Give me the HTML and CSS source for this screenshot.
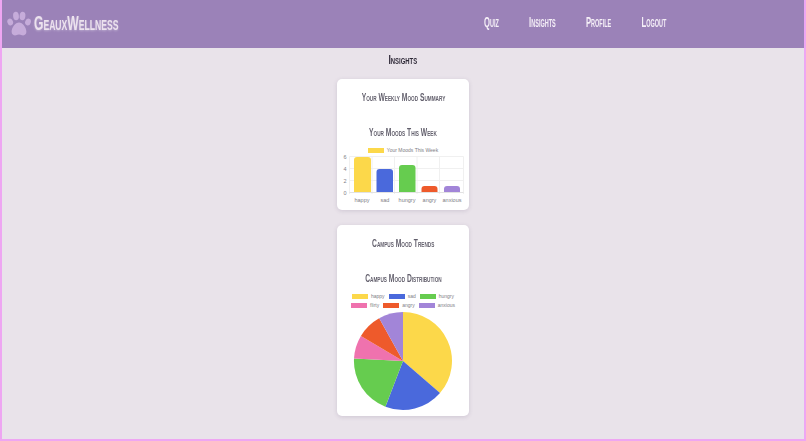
FILE: index.html
```html
<!DOCTYPE html>
<html lang="en">
<head>
<meta charset="utf-8">
<title>GeauxWellness</title>
<link rel="stylesheet" href="styles.css">
</head>
<body>
<header class="topbar">
  <div class="brand">
    <svg class="paw" viewBox="0 0 24 26" aria-hidden="true">
      <ellipse cx="3.200" cy="11" rx="2.800" ry="3.500" transform="rotate(-20 3.200 11)"/>
      <ellipse cx="9" cy="5" rx="2.900" ry="4.200" transform="rotate(-6 9 5)"/>
      <ellipse cx="15.500" cy="5" rx="2.900" ry="4.200" transform="rotate(6 15.500 5)"/>
      <ellipse cx="21" cy="11" rx="2.800" ry="3.500" transform="rotate(20 21 11)"/>
      <path d="M12 11.500c3.600 0 7.400 5.200 7.400 9.200 0 3-2.600 4-4.400 3.600-1.200-.3-2-.7-3-.7s-1.800.4-3 .7c-1.800.4-4.400-.6-4.400-3.600 0-4 3.800-9.200 7.400-9.200z"/>
    </svg>
    <span class="brand-name">GeauxWellness</span>
  </div>
  <nav class="nav">
    <a class="nav-link" href="#">Quiz</a>
    <a class="nav-link" href="#">Insights</a>
    <a class="nav-link" href="#">Profile</a>
    <a class="nav-link" href="#">Logout</a>
  </nav>
</header>
<main class="content">
  <h1 class="page-title">Insights</h1>
  <section class="card card-summary">
    <h2 class="card-title">Your Weekly Mood Summary</h2>
    <h3 class="chart-title">Your Moods This Week</h3>
    <ul class="legend legend-single">
      <li class="legend-item"><span class="swatch yellow"></span>Your Moods This Week</li>
    </ul>
    <svg class="bars" viewBox="0 0 124 54" aria-label="Bar chart">
      <g class="grid">
        <path d="M8.500 3.500H122.500M8.500 15.500H122.500M8.500 27.500H122.500"/>
        <path d="M8.500 3.500V41M31 3.500V41M53.500 3.500V41M76 3.500V41M98.500 3.500V41M122.500 3.500V41"/>
      </g>
      <path class="axis" d="M8.500 39.500H122.500"/>
      <path fill="#fcd84a" d="M13 39V7a3 3 0 0 1 3-3h11a3 3 0 0 1 3 3v32z"/>
      <path fill="#4a69dc" d="M35.500 39V19a3 3 0 0 1 3-3h10.500a3 3 0 0 1 3 3v20z"/>
      <path fill="#66cc4f" d="M58 39V15a3 3 0 0 1 3-3h10.500a3 3 0 0 1 3 3v24z"/>
      <path fill="#ee5a2b" d="M80.500 39V36a3 3 0 0 1 3-3h10a3 3 0 0 1 3 3v3z"/>
      <path fill="#a285d8" d="M103 39V36a3 3 0 0 1 3-3h10a3 3 0 0 1 3 3v3z"/>
      <g class="tick tick-y">
        <text x="5.500" y="5.500">6</text>
        <text x="5.500" y="17.500">4</text>
        <text x="5.500" y="29.500">2</text>
        <text x="5.500" y="41.500">0</text>
      </g>
      <g class="tick tick-x">
        <text x="21" y="49">happy</text>
        <text x="44" y="49">sad</text>
        <text x="66" y="49">hungry</text>
        <text x="88.500" y="49">angry</text>
        <text x="111" y="49">anxious</text>
      </g>
    </svg>
  </section>
  <section class="card card-trends">
    <h2 class="card-title">Campus Mood Trends</h2>
    <h3 class="chart-title">Campus Mood Distribution</h3>
    <ul class="legend legend-wrap">
      <li class="legend-item"><span class="swatch yellow"></span>happy</li>
      <li class="legend-item"><span class="swatch blue"></span>sad</li>
      <li class="legend-item"><span class="swatch green"></span>hungry</li>
      <li class="legend-item"><span class="swatch pink"></span>flirty</li>
      <li class="legend-item"><span class="swatch red"></span>angry</li>
      <li class="legend-item"><span class="swatch purple"></span>anxious</li>
    </ul>
    <svg class="pie" viewBox="0 0 100 100" aria-label="Pie chart">
      <path fill="#fcd84a" d="M50 50L50 1A49 49 0 0 1 87 82.100Z"/>
      <path fill="#4a69dc" d="M50 50L87 82.100A49 49 0 0 1 32.400 95.700Z"/>
      <path fill="#66cc4f" d="M50 50L32.400 95.700A49 49 0 0 1 1 47.500Z"/>
      <path fill="#ef72ae" d="M50 50L1 47.500A49 49 0 0 1 7.900 24.900Z"/>
      <path fill="#ee5a2b" d="M50 50L7.900 24.900A49 49 0 0 1 26.200 7.200Z"/>
      <path fill="#a285d8" d="M50 50L26.200 7.200A49 49 0 0 1 50 1Z"/>
    </svg>
  </section>
</main>
</body>
</html>
```
FILE: styles.css
```css
* { box-sizing: border-box; }
html, body { height: 100%; }
body {
  margin: 0;
  overflow: hidden;
  background: #e9e3ea;
  border: 2px solid #eea6f2;
  border-top: 0;
  font-family: "Liberation Sans", sans-serif;
}
.topbar {
  display: flex;
  align-items: center;
  height: 48px;
  padding-left: 5px;
  background: #9b82b8;
}
.brand {
  display: flex;
  flex: none;
  align-items: center;
  gap: 3px;
  width: 477px;
}
.paw { width: 24px; height: 26px; fill: #c6acda; filter: blur(.3px); }
.brand-name {
  margin-bottom: 2px;
  font-size: 21px;
  font-weight: 700;
  font-variant: small-caps;
  color: #ece2ee;
  text-shadow: 0 1px 3px rgba(255, 255, 255, .35);
  transform: scaleX(.575);
  transform-origin: left center;
  white-space: nowrap;
  filter: blur(.3px);
}
.nav {
  display: flex;
  flex: none;
  gap: 55px;
  margin-bottom: 4px;
  transform: scaleX(.55);
  transform-origin: left center;
  filter: blur(.3px);
}
.nav-link {
  font-size: 14px;
  font-weight: 700;
  font-variant: small-caps;
  color: #f5eff7;
  text-decoration: none;
  white-space: nowrap;
}
.content {
  display: flex;
  flex-direction: column;
  align-items: center;
}
.page-title {
  margin: 4px 0 12px;
  font-size: 13px;
  line-height: 15px;
  font-variant: small-caps;
  color: #2f2a38;
  transform: scaleX(.66);
  white-space: nowrap;
  filter: blur(.3px);
}
.card {
  display: flex;
  flex-direction: column;
  align-items: center;
  width: 132px;
  background: #fff;
  border-radius: 5px;
  box-shadow: 0 1px 4px rgba(90, 70, 110, .18);
}
.card-summary { height: 131px; margin-bottom: 15px; }
.card-trends { height: 191px; }
.card-title, .chart-title {
  margin: 0;
  font-size: 11.500px;
  line-height: 12px;
  font-weight: 700;
  font-variant: small-caps;
  color: #625f6c;
  transform: scaleX(.585);
  white-space: nowrap;
  filter: blur(.3px);
}
.card-title { margin-top: 12px; }
.chart-title { margin-top: 23px; }
.legend {
  display: flex;
  flex-wrap: wrap;
  justify-content: center;
  gap: 3px 4px;
  margin: 9px 0 0;
  padding: 0;
  list-style: none;
}
.legend-single .legend-item { font-size: 5px; }
.legend-wrap { width: 106px; }
.legend-item {
  display: flex;
  align-items: center;
  gap: 3px;
  font-size: 5px;
  line-height: 6px;
  color: #807e85;
}
.swatch { width: 16px; height: 5px; }
.yellow { background: #fcd84a; }
.blue { background: #4a69dc; }
.green { background: #66cc4f; }
.pink { background: #ef72ae; }
.red { background: #ee5a2b; }
.purple { background: #a285d8; }
.bars { display: block; width: 124px; height: 54px; }
.grid path { fill: none; stroke: #f0f0f0; stroke-width: 1; }
.axis { fill: none; stroke: #e2e2e2; stroke-width: 1; }
.tick text {
  font-size: 5.500px;
  fill: #807e85;
}
.tick-y text { text-anchor: end; }
.tick-x text { text-anchor: middle; }
.pie { display: block; width: 100px; height: 100px; margin-top: 3px; }
```
